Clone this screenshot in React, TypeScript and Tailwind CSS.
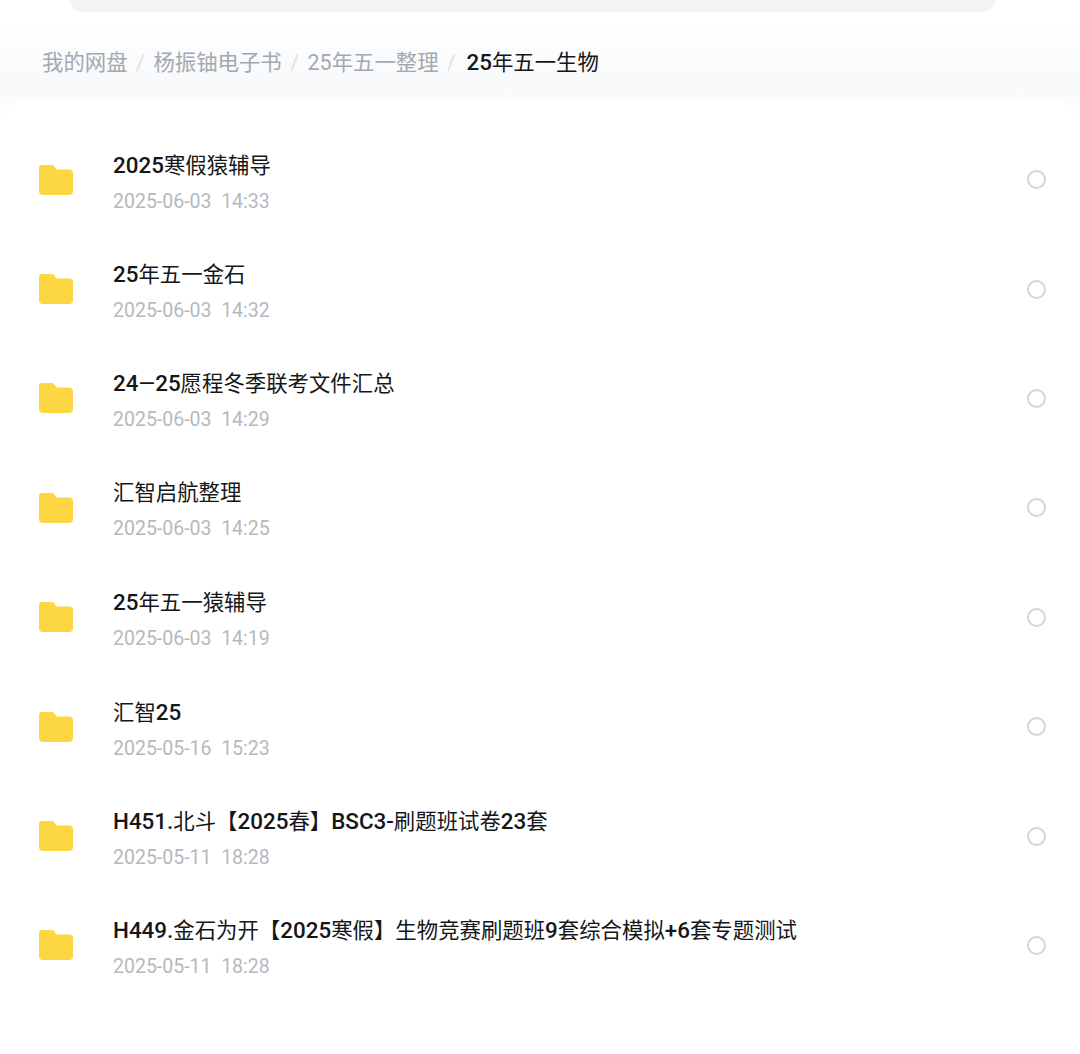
const fontStack = "font-['Roboto','Noto_Sans_CJK_SC',sans-serif]"

const folders = [
  { name: '2025寒假猿辅导', time: '2025-06-03  14:33' },
  { name: '25年五一金石', time: '2025-06-03  14:32' },
  { name: '24—25愿程冬季联考文件汇总', time: '2025-06-03  14:29' },
  { name: '汇智启航整理', time: '2025-06-03  14:25' },
  { name: '25年五一猿辅导', time: '2025-06-03  14:19' },
  { name: '汇智25', time: '2025-05-16  15:23' },
  { name: 'H451.北斗【2025春】BSC3-刷题班试卷23套', time: '2025-05-11  18:28' },
  { name: 'H449.金石为开【2025寒假】生物竞赛刷题班9套综合模拟+6套专题测试', time: '2025-05-11  18:28' },
]

const crumbs = ['我的网盘', '杨振铀电子书', '25年五一整理']

// latin and digits sit a little heavier and larger than the CJK around them
const MixedText = ({ text }: { text: string }) => (
  <>
    {text.split(/([A-Za-z0-9.+-]+)/).map((part, i) =>
      i % 2 === 1 ? (
        <span key={i} className="text-[22.4px] font-medium">
          {part}
        </span>
      ) : (
        <span key={i}>{part}</span>
      ),
    )}
  </>
)

const FolderIcon = () => (
  <svg width="36" height="32" viewBox="0 0 36 32" className="shrink-0">
    <path
      d="M4 1h9.5c1.4 0 2.3.6 3.1 1.7L18.6 5.5H31c2.5 0 4 1.5 4 4V27c0 2.5-1.500 4-4 4H5c-2.500 0-4-1.500-4-4V4c0-1.900 1.100-3 3-3z"
      fill="#fdd643"
    />
  </svg>
)

const FolderRow = ({ name, time }: { name: string; time: string }) => (
  <li className="flex h-[109.4px] items-center pl-[38px] pr-[34px]">
    <FolderIcon />
    <div className="ml-[39px] flex-1 pt-[6px]">
      <div className="text-[21.4px] leading-[30px] text-[#141618]">
        <MixedText text={name} />
      </div>
      <div className="mt-[7px] whitespace-pre text-[19.5px] leading-[28px] text-[#b5b9be]">{time}</div>
    </div>
    <span className="size-[19px] rounded-full border-2 border-[#d3d5d8] bg-white" />
  </li>
)

export default function App() {
  return (
    <div className={`flex h-[1054px] w-[1080px] flex-col overflow-hidden bg-gradient-to-b from-white from-[2%] via-[#f7f9fb] via-[8%] to-white to-[12%] ${fontStack}`}>
      <div className="ml-[70px] mr-[85px] h-[12px] shrink-0 rounded-b-[16px] bg-[#f3f4f6]" />
      <nav className="flex h-[88px] shrink-0 items-center gap-[8.500px] px-[42px] pt-[14px] text-[21.4px]">
        {crumbs.map((c) => (
          <div key={c} className="flex items-center gap-[8.500px] text-[#a4a9af]">
            <span>{c}</span>
            <span className="text-[#dfe2e6]">/</span>
          </div>
        ))}
        <span className="ml-[2px] text-[#141618]">
          <MixedText text="25年五一生物" />
        </span>
      </nav>
      <main className="flex-1 rounded-t-[26px] bg-white pt-[25px]">
        <ul>
          {folders.map((f) => (
            <FolderRow key={f.name} name={f.name} time={f.time} />
          ))}
        </ul>
      </main>
    </div>
  )
}
